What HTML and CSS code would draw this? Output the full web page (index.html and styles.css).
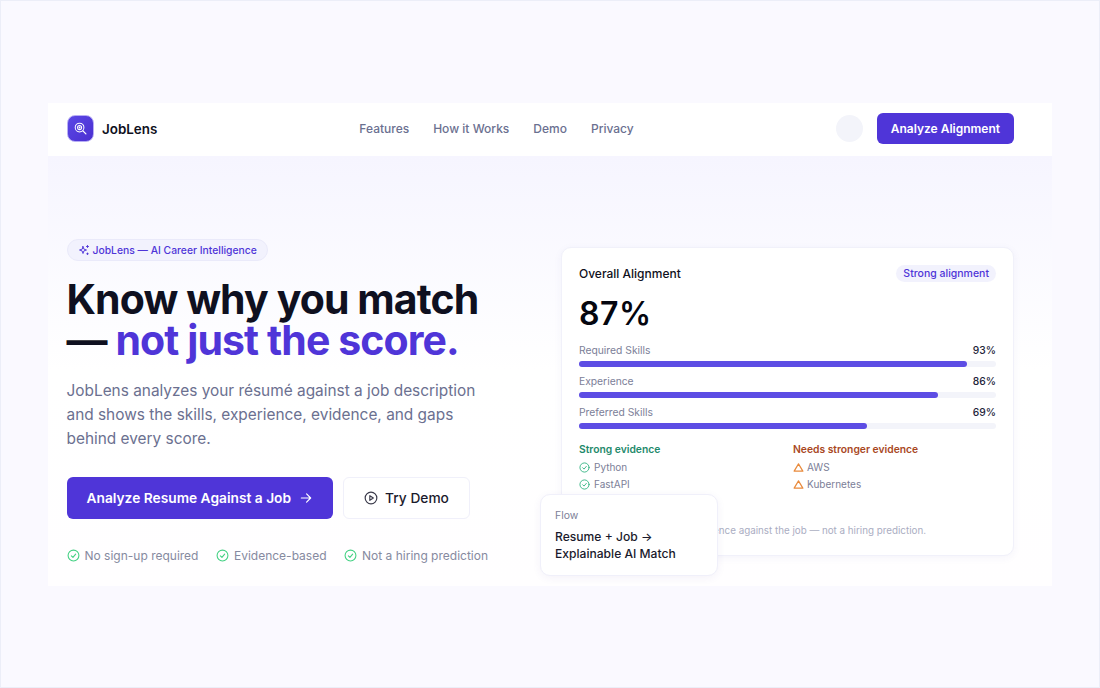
FILE: index.html

```html
<!DOCTYPE html>
<html lang="en">
<head>
  <meta charset="UTF-8">
  <meta name="viewport" content="width=device-width, initial-scale=1.0">
  <title>JobLens</title>
  <link rel="stylesheet" href="styles.css">
</head>
<body>
  <div class="frame">
    <header class="topbar">
      <div class="brand">
        <span class="logo">
          <svg width="13" height="13" viewBox="0 0 14 14" fill="none" stroke="#fff" stroke-width="1.1" stroke-linecap="round">
            <circle cx="6" cy="6" r="4.7"/>
            <circle cx="6" cy="6" r="2.2"/>
            <circle cx="6" cy="6" r=".5" fill="#fff"/>
            <path d="M9.6 9.6l3.2 3.2" stroke-width="1.4"/>
          </svg>
        </span>
        <span class="brand-name">JobLens</span>
      </div>
      <nav class="nav">
        <a href="#">Features</a>
        <a href="#">How it Works</a>
        <a href="#">Demo</a>
        <a href="#">Privacy</a>
      </nav>
      <div class="top-actions">
        <span class="avatar"></span>
        <a href="#" class="btn-small">Analyze Alignment</a>
      </div>
    </header>

    <section class="hero">
      <div class="intro">
        <div class="pill">
          <svg width="12" height="12" viewBox="0 0 24 24" fill="none" stroke="#4f35d8" stroke-width="1.9" stroke-linecap="round" stroke-linejoin="round">
            <path d="M10 5l1.8 5.2L17 12l-5.2 1.8L10 19l-1.8-5.2L3 12l5.2-1.8z"/>
            <path d="M19 3v4M17 5h4M19 18v3M17.5 19.5h3"/>
          </svg>
          JobLens — AI Career Intelligence
        </div>
        <h1>Know why you match<br>— <span class="accent">not just the score.</span></h1>
        <p class="lead">JobLens analyzes your résumé against a job description and shows the skills, experience, evidence, and gaps behind every score.</p>
        <div class="cta-row">
          <a href="#" class="btn-primary">Analyze Resume Against a Job
            <svg width="14" height="14" viewBox="0 0 24 24" fill="none" stroke="#fff" stroke-width="2" stroke-linecap="round" stroke-linejoin="round"><path d="M4 12h16M13 5l7 7-7 7"/></svg>
          </a>
          <a href="#" class="btn-ghost">
            <svg width="14" height="14" viewBox="0 0 24 24" fill="none" stroke="#3a3a4a" stroke-width="2" stroke-linecap="round" stroke-linejoin="round"><circle cx="12" cy="12" r="10"/><path d="M10 8l6 4-6 4z"/></svg>
            Try Demo
          </a>
        </div>
        <ul class="ticks">
          <li><svg class="tick" viewBox="0 0 24 24"><circle cx="12" cy="12" r="10"/><path d="M8 12.5l3 3 5-6"/></svg>No sign-up required</li>
          <li><svg class="tick" viewBox="0 0 24 24"><circle cx="12" cy="12" r="10"/><path d="M8 12.5l3 3 5-6"/></svg>Evidence-based</li>
          <li><svg class="tick" viewBox="0 0 24 24"><circle cx="12" cy="12" r="10"/><path d="M8 12.5l3 3 5-6"/></svg>Not a hiring prediction</li>
        </ul>
      </div>

      <div class="card-wrap">
        <div class="card">
          <div class="card-head">
            <span class="card-title">Overall Alignment</span>
            <span class="tag">Strong alignment</span>
          </div>
          <div class="score">87%</div>
          <div class="meter">
            <div class="meter-label"><span>Required Skills</span><b>93%</b></div>
            <div class="track"><div class="fill" style="width:93%"></div></div>
          </div>
          <div class="meter">
            <div class="meter-label"><span>Experience</span><b>86%</b></div>
            <div class="track"><div class="fill" style="width:86%"></div></div>
          </div>
          <div class="meter">
            <div class="meter-label"><span>Preferred Skills</span><b>69%</b></div>
            <div class="track"><div class="fill" style="width:69%"></div></div>
          </div>
          <div class="evidence">
            <div>
              <h4 class="good">Strong evidence</h4>
              <p class="ev-item"><svg class="ev-ok" viewBox="0 0 24 24"><circle cx="12" cy="12" r="10"/><path d="M8 12.5l3 3 5-6"/></svg>Python</p>
              <p class="ev-item"><svg class="ev-ok" viewBox="0 0 24 24"><circle cx="12" cy="12" r="10"/><path d="M8 12.5l3 3 5-6"/></svg>FastAPI</p>
            </div>
            <div>
              <h4 class="weak">Needs stronger evidence</h4>
              <p class="ev-item"><svg class="ev-warn" viewBox="0 0 24 24"><path d="M12 4L2.5 20h19z"/></svg>AWS</p>
              <p class="ev-item"><svg class="ev-warn" viewBox="0 0 24 24"><path d="M12 4L2.5 20h19z"/></svg>Kubernetes</p>
            </div>
          </div>
          <p class="note">JobLens compares your evidence against the job — not a hiring prediction.</p>
        </div>
        <div class="flow">
          <span class="flow-label">Flow</span>
          <p>Resume + Job →<br>Explainable AI Match</p>
        </div>
      </div>
    </section>
  </div>
</body>
</html>
```

FILE: styles.css

```css
* {
  box-sizing: border-box;
}
html, body {
  height: 100%;
}
body {
  margin: 0;
  padding: 102px 47px 0;
  font-family: "Inter", "Liberation Sans", sans-serif;
  background-color: #faf9ff;
  border: 1px solid #eceef8;
  color: #0f1020;
}
a {
  text-decoration: none;
}
.frame {
  width: 1004px;
  height: 483px;
  background-color: #fff;
}
.topbar {
  height: 53px;
  padding: 0 38px 2px 18.5px;
  display: flex;
  justify-content: space-between;
  align-items: center;
}
.brand {
  display: flex;
  align-items: center;
  gap: 8px;
}
.logo {
  width: 27.5px;
  height: 27.5px;
  border-radius: 8px;
  background: linear-gradient(135deg, #5b48e6, #4a2fd0);
  border: 1px solid #b8aef5;
  display: flex;
  align-items: center;
  justify-content: center;
}
.brand-name {
  font-size: 13.4px;
  font-weight: 600;
}
.nav {
  display: flex;
  gap: 24px;
}
.nav a {
  font-size: 12px;
  font-weight: 500;
  color: #6b7090;
}
.top-actions {
  display: flex;
  align-items: center;
  gap: 14px;
}
.avatar {
  width: 27px;
  height: 27px;
  border-radius: 50%;
  background-color: #f3f4fa;
}
.btn-small {
  height: 31px;
  padding: 0 14px;
  display: flex;
  align-items: center;
  font-size: 12px;
  font-weight: 600;
  color: #fff;
  background-color: #4f35d8;
  border-radius: 6px;
}
.hero {
  height: 430px;
  padding: 83px 38px 0 18.5px;
  display: flex;
  justify-content: space-between;
  background: linear-gradient(to bottom, #f6f5ff, #fff 50%, #fffeff);
}
.intro {
  width: 440px;
}
.pill {
  display: inline-flex;
  align-items: center;
  gap: 3px;
  height: 22px;
  padding: 0 10px;
  font-size: 10.35px;
  font-weight: 500;
  color: #4f35d8;
  background-color: #f2f2fd;
  border: 1px solid #eaeafa;
  border-radius: 11px;
}
h1 {
  margin: 18px 0 0;
  font-size: 41px;
  line-height: 41px;
  font-weight: 700;
  letter-spacing: -0.9px;
}
.accent {
  color: #4f35d8;
}
.lead {
  width: 420px;
  margin: 18px 0 0;
  font-size: 15.4px;
  line-height: 24px;
  color: #6b7090;
}
.cta-row {
  margin-top: 26px;
  display: flex;
  gap: 10.5px;
}
.btn-primary, .btn-ghost {
  height: 42px;
  display: flex;
  align-items: center;
  font-size: 13.75px;
  font-weight: 600;
  border-radius: 6px;
}
.btn-primary {
  padding: 0 19.5px 0 20px;
  gap: 8px;
  color: #fff;
  background-color: #4f35d8;
}
.btn-ghost {
  padding: 0 20px;
  gap: 7px;
  font-weight: 500;
  color: #1a1a2c;
  background-color: #fff;
  border: 1px solid #f0f0fa;
}
.ticks {
  margin: 29px 0 0;
  padding: 0;
  list-style: none;
  display: flex;
  gap: 17.5px;
}
.ticks li {
  display: flex;
  align-items: center;
  gap: 5px;
  font-size: 12px;
  color: #868aa0;
}
.tick {
  width: 13px;
  height: 13px;
  fill: none;
  stroke: #45d184;
  stroke-width: 2;
  stroke-linecap: round;
  stroke-linejoin: round;
}
.card-wrap {
  position: relative;
  margin-top: 8px;
  width: 453px;
  height: 308.5px;
}
.card {
  height: 100%;
  padding: 17px 17px 0;
  background-color: #fff;
  border: 1px solid #f1f1fa;
  border-radius: 10px;
  box-shadow: 0 2px 8px rgba(60, 50, 160, 0.05);
}
.card-head {
  display: flex;
  justify-content: space-between;
  align-items: center;
}
.card-title {
  font-size: 12px;
  font-weight: 500;
}
.tag {
  height: 17px;
  padding: 0 7px;
  display: flex;
  align-items: center;
  font-size: 10.5px;
  font-weight: 500;
  color: #4f35d8;
  background-color: #f2f2fd;
  border-radius: 9px;
}
.score {
  margin: 14px 0 12px;
  font-size: 32px;
  line-height: 36px;
  font-weight: 600;
  letter-spacing: 0.5px;
  color: #05060f;
}
.meter {
  margin-bottom: 8.5px;
}
.meter-label {
  display: flex;
  justify-content: space-between;
  font-size: 10.3px;
  line-height: 13px;
  color: #7c8098;
}
.meter-label b {
  font-weight: 500;
  color: #23243a;
}
.track {
  margin-top: 4px;
  height: 5.5px;
  border-radius: 3px;
  background-color: #f3f4fa;
}
.fill {
  height: 100%;
  border-radius: 3px;
  background-color: #5d4de4;
}
.evidence {
  margin-top: 14px;
  display: grid;
  grid-template-columns: 214px 1fr;
}
h4 {
  margin: 0 0 3px;
  font-size: 10.3px;
  line-height: 13px;
  font-weight: 600;
}
.good {
  color: #1f8a6c;
}
.weak {
  color: #a9481f;
}
.ev-item {
  margin: 0;
  height: 17px;
  display: flex;
  align-items: center;
  gap: 4px;
  font-size: 10px;
  color: #7c8098;
}
.ev-ok, .ev-warn {
  width: 11px;
  height: 11px;
  fill: none;
  stroke-width: 2;
  stroke-linecap: round;
  stroke-linejoin: round;
}
.ev-ok {
  stroke: #35b583;
}
.ev-warn {
  stroke: #e98a3c;
  stroke-width: 2.6;
  margin-right: -1px;
}
.note {
  margin: 32px 0 0;
  font-size: 9.8px;
  color: #aaadc2;
}
.flow {
  position: absolute;
  left: -21px;
  top: 247px;
  width: 178px;
  height: 82px;
  padding: 14px 14px 0;
  background-color: #fff;
  border: 1px solid #f0f0fa;
  border-radius: 10px;
  box-shadow: 0 2px 8px rgba(60, 50, 160, 0.06);
}
.flow-label {
  display: block;
  font-size: 10.4px;
  line-height: 13px;
  color: #7c8098;
}
.flow p {
  margin: 7px 0 0;
  font-size: 12.1px;
  line-height: 16.6px;
  font-weight: 500;
  color: #1a1a2c;
}
```
